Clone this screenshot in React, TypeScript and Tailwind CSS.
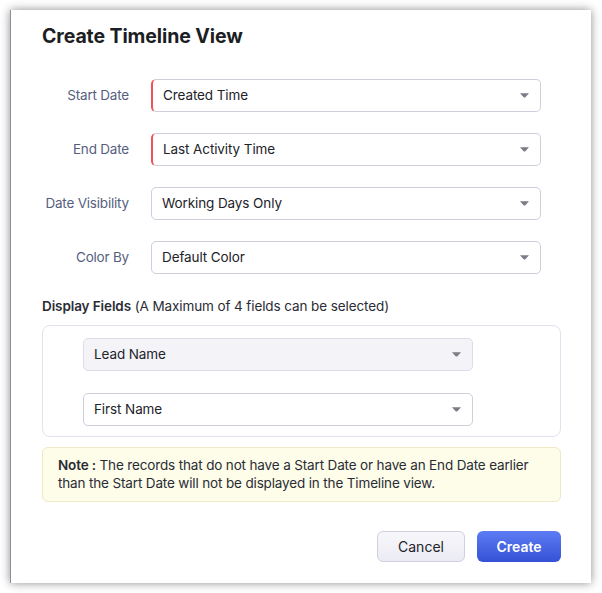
// Create Timeline View dialog

const font = { fontFamily: 'Inter, "Noto Sans", sans-serif' }

function Caret() {
  return (
    <svg width="9" height="5" viewBox="0 0 9 5" className="mr-[1px] shrink-0">
      <path d="M0 0.3 H9 L5.4 4.2 Q4.5 5 3.6 4.2 Z" fill="#7b7d85" />
    </svg>
  )
}

interface SelectBoxProps {
  value: string
  required?: boolean
  disabled?: boolean
}

function SelectBox({ value, required = false, disabled = false }: SelectBoxProps) {
  return (
    <div
      className={`flex h-[33px] w-[390px] items-center justify-between rounded-[5px] border pl-[10px] pr-[10px] text-[13.5px] tracking-[-0.1px] text-[#222329] ${
        disabled ? 'border-[#dcdceb] bg-[#f4f4f8]' : 'border-[#cfcedd] bg-white'
      } ${required ? 'border-l-2 border-l-[#ef5258] pl-[9px]' : ''}`}
    >
      <span>{value}</span>
      <Caret />
    </div>
  )
}

function FieldRow({ label, value, required }: { label: string; value: string; required?: boolean }) {
  return (
    <div className="flex items-center gap-[22px]">
      <div className="w-[87px] whitespace-nowrap text-right text-[13.5px] tracking-[-0.2px] text-[#56607e]">
        {label}
      </div>
      <SelectBox value={value} required={required} />
    </div>
  )
}

export default function App() {
  return (
    <div className="min-h-[593px] bg-white p-[10px]" style={font}>
      <div className="h-[573px] w-[581px] border-l border-l-[#8d8f9c] bg-white pl-[31px] pr-[30px] pt-[14px] shadow-[0_0_9px_rgba(0,0,0,0.45)]">
        {/* Title */}
        <h2 className="text-[19.5px] font-bold leading-[24px] tracking-[-0.1px] text-[#1d1e24]">Create Timeline View</h2>

        {/* Fields */}
        <div className="mt-[31px] flex flex-col gap-[21px]">
          <FieldRow label="Start Date" value="Created Time" required />
          <FieldRow label="End Date" value="Last Activity Time" required />
          <FieldRow label="Date Visibility" value="Working Days Only" />
          <FieldRow label="Color By" value="Default Color" />
        </div>

        {/* Display fields */}
        <p className="mt-[22px] text-[13.5px] leading-[20px] tracking-[-0.1px] text-[#2a2c35]">
          <span className="font-semibold">Display Fields</span> (A Maximum of 4 fields can be selected)
        </p>
        <div className="mt-[9px] flex flex-col gap-[22px] rounded-[8px] border border-[#e2e2ee] pb-[10px] pl-[40px] pt-[12px]">
          <SelectBox value="Lead Name" disabled />
          <SelectBox value="First Name" />
        </div>

        {/* Note */}
        <div className="mt-[10px] rounded-[6px] border border-[#ece9c4] bg-[#fdfde9] pb-[9px] pl-[15px] pr-[8px] pt-[8px] text-[13.5px] leading-[18px] tracking-[-0.15px] text-[#2a2c35]">
          <span className="font-semibold">Note :</span> The records that do not have a Start Date or have an End Date earlier
          than the Start Date will not be displayed in the Timeline view.
        </div>

        {/* Actions */}
        <div className="mt-[29px] flex justify-end gap-[12px]">
          <button
            type="button"
            className="h-[31px] w-[88px] rounded-[6px] border border-[#cfd0e0] bg-gradient-to-b from-[#f7f7fb] to-[#ebebf3] text-[14px] text-[#22232a]"
          >
            Cancel
          </button>
          <button
            type="button"
            className="h-[31px] w-[84px] rounded-[6px] bg-gradient-to-b from-[#5d7cf3] to-[#3551d6] text-[14px] font-semibold text-white"
          >
            Create
          </button>
        </div>
      </div>
    </div>
  )
}
